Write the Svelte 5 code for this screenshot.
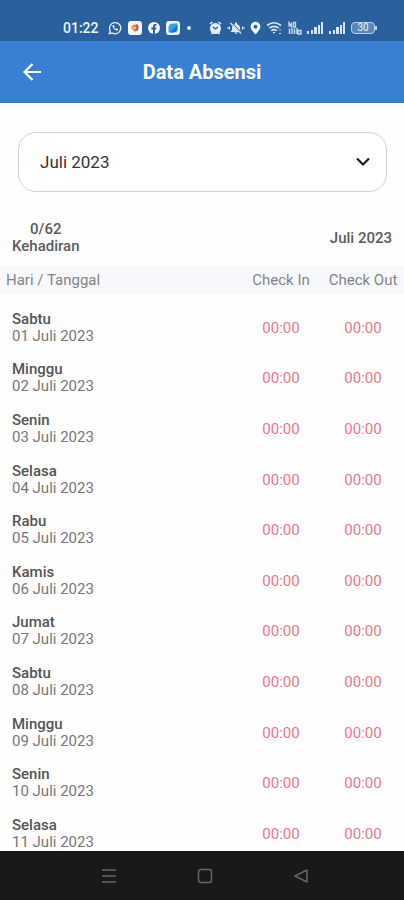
<script>
  const months = ['Juni 2023', 'Juli 2023', 'Agustus 2023'];
  const names = ['Sabtu', 'Minggu', 'Senin', 'Selasa', 'Rabu', 'Kamis', 'Jumat'];
  let month = $state('Juli 2023');
  const days = Array.from({ length: 11 }, (_, i) => ({
    name: names[i % 7],
    date: String(i + 1).padStart(2, '0'),
    checkIn: '00:00',
    checkOut: '00:00'
  }));
</script>

<div class="app">
  <div class="status">
    <span class="clock">01:22</span>
    <div class="group apps">
      <svg width="14" height="14" viewBox="0 0 14 14" fill="none" stroke="#e4eefa">
        <path d="M1.3 12.7l.9-3A5.6 5.6 0 1 1 4.400 12z" stroke-width="1.3" />
        <path d="M4.600 4.200c-.4 2.600 2.500 5.500 5.100 5.300l.4-1.400-1.500-.8-.8.8c-.8-.3-1.500-1-1.800-1.800l.7-.7-.7-1.500z" fill="#e4eefa" stroke="none" />
      </svg>
      <svg width="14" height="14" viewBox="0 0 14 14">
        <rect width="14" height="14" rx="3" fill="#f8f6f4" />
        <path d="M3 4.500l4 1L6.500 10.500 4 9z" fill="#f0a63c" />
        <path d="M5 3.500l2 .5 2-1 1.500 1.500L9 8 6 7z" fill="#d9576b" />
        <path d="M11 5l-1 4.500-4 1.200L7.500 7.500z" fill="#8c62b5" />
        <circle cx="7" cy="6.500" r="1.200" fill="#f2c54d" />
      </svg>
      <svg width="12" height="14" viewBox="0 0 12 14">
        <circle cx="6" cy="7" r="6" fill="#f2f7fd" />
        <path d="M5 13V8.500H3.400V6.600H5V5.300c0-1.700 1-2.500 3.400-2.200v1.700c-1.200 0-1.500.2-1.500.9v.9h1.500l-.3 1.900H6.900V13z" fill="#2b609f" />
      </svg>
      <svg width="14" height="14" viewBox="0 0 14 14">
        <rect width="14" height="14" rx="3" fill="#f2f8ff" />
        <path d="M2.500 7q0-4.500 4.500-4.500h4.500V7q0 4.500-4.500 4.500H2.500z" fill="#2ba0f2" />
        <path d="M4 11.500l7.500-7.500v3q0 4.500-4.500 4.500z" fill="#1672d4" />
      </svg>
      <svg width="6" height="14" viewBox="0 0 6 14"><circle cx="3" cy="7" r="2" fill="#dceafa" /></svg>
    </div>
    <div class="group system">
      <svg width="13" height="14" viewBox="0 0 13 14">
        <circle cx="6.500" cy="7.500" r="5.500" fill="#e4eefa" />
        <path d="M1 3l2.500-2M12 3L9.500 1M2.500 13l1.500-2M10.500 13L9 11" stroke="#e4eefa" stroke-width="1.600" />
        <path d="M4 6l2.500 2L9 6" fill="none" stroke="#2b609f" stroke-width="1.300" />
      </svg>
      <svg width="18" height="14" viewBox="0 0 18 14">
        <path d="M3.500 11l1.500-2V6.500A4 4 0 0 1 8 3V1.500h2V3a4 4 0 0 1 3 3.500V9l1.500 2zM7 11.500h4q-2 2.500-4 0z" fill="#dce9f8" />
        <path d="M4.500 2l10.500 10.500" stroke="#2b609f" stroke-width="1.200" />
        <path d="M3.500 2L14 12.500M0 7h2M2.500 5.500v3M15.500 5.500v3M16 7h2" stroke="#dce9f8" stroke-width="1.200" />
      </svg>
      <svg width="11" height="14" viewBox="0 0 11 14">
        <path fill-rule="evenodd" d="M5.500.8A4.900 4.900 0 0 0 .6 5.700C.6 8.600 5.500 13.500 5.500 13.500s4.900-4.900 4.900-7.800A4.900 4.900 0 0 0 5.500.8zm0 3a1.900 1.900 0 1 1 0 3.800 1.900 1.900 0 0 1 0-3.800z" fill="#eef5fd" />
      </svg>
      <svg width="17" height="14" viewBox="0 0 17 14" fill="none" stroke="#d6e5f7" stroke-width="1.700">
        <path d="M1 4.500q7-5.500 14 0M3.200 7.200q4.800-3.800 9.600 0M5.300 9.700q2.700-2 5.400 0" />
        <path d="M6.500 11h3L8 12.800z" fill="#d6e5f7" stroke="none" />
        <path d="M13 9.500l1-1 1 1M13 12l1 1 1-1" stroke-width="1" />
      </svg>
      <svg width="14" height="14" viewBox="0 0 14 14" fill="none" stroke="#c6daf1">
        <path d="M1 6V1.500L3.500 6V1.500M5.500 1.500V6h2V1.500z" stroke-width="1.300" />
        <path d="M1.500 7.500V13M4 7.500V13M6.500 7.500V13M9 7V13M10 9.500h3V13h-3z" stroke-width="1.500" />
      </svg>
      {#each [0, 1] as i (i)}
        <svg width="17" height="14" viewBox="0 0 17 14" fill="#d6e5f7">
          <path d="M0 10h2v3H0zM4 9h2v4H4zM7 6h3v7H7zM11 4h2v9h-2zM14 1h2v12h-2z" />
        </svg>
      {/each}
      <span class="battery">30</span>
    </div>
  </div>

  <header>
    <button class="back" aria-label="Kembali">
      <svg width="20" height="20" viewBox="0 0 20 20" fill="none" stroke="#fff" stroke-width="2.200">
        <path d="M19 10H2.500M10.500 2L2.500 10l8 8" />
      </svg>
    </button>
    <h1>Data Absensi</h1>
  </header>

  <div class="picker">
    <select aria-label="Bulan" bind:value={month}>
      {#each months as m (m)}<option>{m}</option>{/each}
    </select>
    <svg width="14" height="10" viewBox="0 0 14 10" fill="none" stroke="#1c1c1c" stroke-width="2.200">
      <path d="M1 1.500l6 6 6-6" />
    </svg>
  </div>

  <div class="summary">
    <div class="count">0/62<br />Kehadiran</div>
    <div>{month}</div>
  </div>

  <main>
    <table>
      <thead>
        <tr><th class="day">Hari / Tanggal</th><th>Check In</th><th>Check Out</th></tr>
      </thead>
      <tbody>
        {#each days as d (d.date)}
          <tr>
            <td class="day"><strong>{d.name}</strong><span>{d.date} Juli 2023</span></td>
            <td>{d.checkIn}</td>
            <td>{d.checkOut}</td>
          </tr>
        {/each}
      </tbody>
    </table>
  </main>

  <nav>
    <button aria-label="Aplikasi terbaru">
      <svg width="16" height="16" viewBox="0 0 16 16" stroke="#666" stroke-width="1.500"><path d="M1 2h14M1 8h14M1 14h14" /></svg>
    </button>
    <button aria-label="Beranda">
      <svg width="16" height="16" viewBox="0 0 16 16" fill="none" stroke="#666" stroke-width="1.500"><rect x="1.500" y="1.500" width="13" height="13" rx="2.500" /></svg>
    </button>
    <button aria-label="Kembali ke layar sebelumnya">
      <svg width="16" height="16" viewBox="0 0 16 16" fill="none" stroke="#666" stroke-width="1.500" stroke-linejoin="round"><path d="M14 2v12L2 8z" /></svg>
    </button>
  </nav>
</div>

<style>
  .app {
    display: flex;
    flex-direction: column;
    height: 100vh;
    background: #fefefe;
    color: #5c5c5c;
    font: 15px/17px Roboto, sans-serif;
  }
  svg {
    display: block;
    flex: none;
  }
  button {
    display: flex;
    padding: 0;
    border: 0;
    background: none;
  }
  .status {
    display: flex;
    align-items: center;
    height: 26px;
    padding: 15px 29px 0 63px;
    background: #2b609f;
    color: #eef5fd;
  }
  .clock {
    font-size: 14px;
    font-weight: 500;
  }
  .group {
    display: flex;
    align-items: center;
  }
  .apps {
    gap: 6px;
    margin-left: 9px;
  }
  .system {
    gap: 5px;
    margin-left: auto;
  }
  .battery {
    box-sizing: border-box;
    position: relative;
    width: 24px;
    height: 12px;
    border: 1px solid #b9d0eb;
    border-radius: 4px;
    background: #5b86b9;
    font-size: 10px;
    line-height: 10px;
    text-align: center;
  }
  .battery::after {
    content: '';
    position: absolute;
    top: 3px;
    right: -3px;
    width: 2px;
    height: 4px;
    background: #b9d0eb;
  }
  header {
    display: grid;
    grid-template-columns: 20px 1fr 20px;
    align-items: center;
    height: 61px;
    padding: 0 22px;
    border-bottom: 1px solid #3474c4;
    background: #3a80d2;
    color: #fff;
  }
  h1 {
    margin: 0;
    font-size: 20px;
    line-height: 24px;
    font-weight: 700;
    text-align: center;
  }
  .picker {
    display: grid;
    align-items: center;
    margin: 29px 17px 0 18px;
  }
  .picker > * {
    grid-area: 1 / 1;
  }
  .picker svg {
    justify-self: end;
    margin-right: 17px;
    pointer-events: none;
  }
  select {
    appearance: none;
    width: 100%;
    height: 60px;
    padding: 0 40px 0 21px;
    border: 1px solid #d2d2d2;
    border-radius: 18px;
    background: #fff;
    color: #333;
    font: 17px/20px Roboto, sans-serif;
  }
  .summary {
    display: flex;
    align-items: center;
    justify-content: space-between;
    padding: 29px 12px 11px;
    font-weight: 500;
  }
  .count {
    text-align: center;
  }
  main {
    flex: 1;
    min-height: 0;
    overflow-y: auto;
    scrollbar-width: none;
  }
  table {
    width: 100%;
    height: 100%;
    border-collapse: collapse;
    table-layout: fixed;
    text-align: center;
  }
  thead {
    background: #f7f8fc;
    color: #858585;
  }
  th {
    width: 82px;
    height: 28px;
    padding: 0;
    font-weight: 400;
    white-space: nowrap;
  }
  th.day {
    width: auto;
    padding-left: 6px;
    text-align: left;
  }
  td {
    padding: 16px 0 0;
    color: #e8788c;
    vertical-align: bottom;
    line-height: 34px;
  }
  td.day {
    padding-left: 12px;
    color: #777;
    text-align: left;
    line-height: 17px;
  }
  .day strong,
  .day span {
    display: block;
  }
  .day strong {
    color: #555;
    font-weight: 500;
  }
  nav {
    display: flex;
    align-items: center;
    justify-content: center;
    gap: 80px;
    height: 49px;
    padding-left: 6px;
    background: #191919;
  }
</style>
